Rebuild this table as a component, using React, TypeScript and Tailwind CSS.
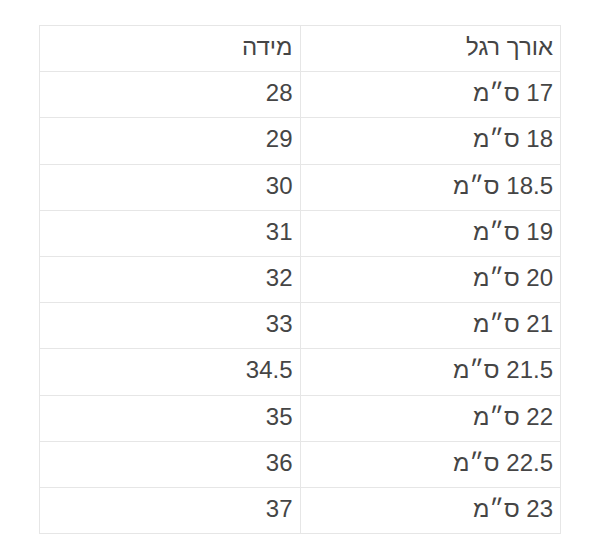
const rows: [string, string][] = [
  ['17 ס״מ', '28'],
  ['18 ס״מ', '29'],
  ['18.5 ס״מ', '30'],
  ['19 ס״מ', '31'],
  ['20 ס״מ', '32'],
  ['21 ס״מ', '33'],
  ['21.5 ס״מ', '34.5'],
  ['22 ס״מ', '35'],
  ['22.5 ס״מ', '36'],
  ['23 ס״מ', '37'],
];

const cell = 'border border-[#e6e6e6] h-[46.2px] px-[7px] pb-[3px] text-right align-middle font-normal';

export default function App() {
  return (
    <div className="min-h-[554px] bg-white pt-[25px] font-['Liberation_Sans',Arial,sans-serif] text-[24px] text-[#454545]">
      <table dir="rtl" className="mx-auto w-[522px] table-fixed border-collapse">
        <thead>
          <tr>
            <th className={cell}>אורך רגל</th>
            <th className={cell}>מידה</th>
          </tr>
        </thead>
        <tbody>
          {rows.map(([len, size]) => (
            <tr key={size}>
              <td className={cell}>{len}</td>
              <td className={cell}>{size}</td>
            </tr>
          ))}
        </tbody>
      </table>
    </div>
  );
}
